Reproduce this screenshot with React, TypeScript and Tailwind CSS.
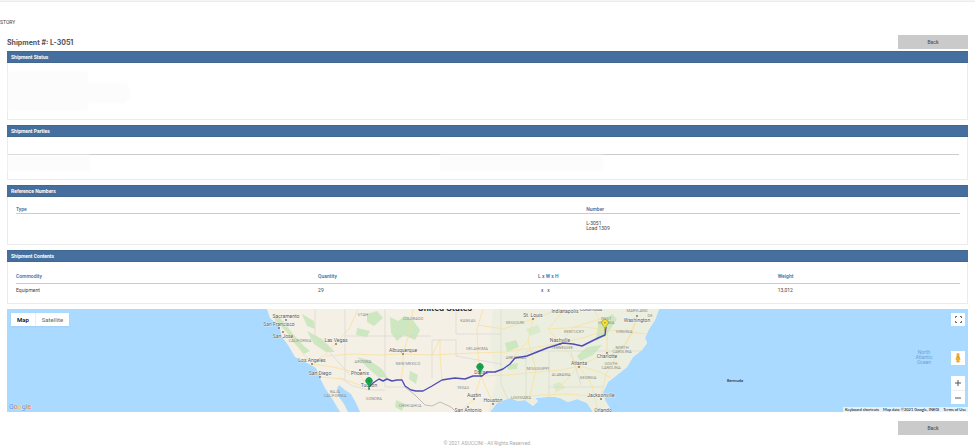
import { ReactNode } from 'react';

const cities = [
  { name: 'Sacramento', x: 278, y: 9, dot: [278, 11] },
  { name: 'San Francisco', x: 271, y: 17, dot: [271, 19] },
  { name: 'San Jose', x: 275, y: 29, dot: [275, 23] },
  { name: 'Las Vegas', x: 328, y: 33, dot: [328, 35] },
  { name: 'Los Angeles', x: 304, y: 53, dot: [304, 55] },
  { name: 'San Diego', x: 312, y: 66, dot: [312, 68] },
  { name: 'Phoenix', x: 352, y: 66, dot: [352, 61] },
  { name: 'Tucson', x: 361, y: 78, dot: [361, 80] },
  { name: 'Albuquerque', x: 395, y: 43, dot: [395, 45] },
  { name: 'Dallas', x: 473, y: 65, dot: [473, 67] },
  { name: 'Austin', x: 466, y: 88, dot: [466, 90] },
  { name: 'Houston', x: 485, y: 93, dot: [485, 95] },
  { name: 'San Antonio', x: 460, y: 103, dot: [460, 98] },
  { name: 'St. Louis', x: 525, y: 8, dot: [525, 10] },
  { name: 'Indianapolis', x: 557, y: 4, dot: [557, -2] },
  { name: 'Columbus', x: 583, y: 2, dot: [583, -2] },
  { name: 'Washington', x: 629, y: 13, dot: [629, 7] },
  { name: 'Nashville', x: 552, y: 33, dot: [552, 35] },
  { name: 'Charlotte', x: 599, y: 49, dot: [599, 44] },
  { name: 'Atlanta', x: 571, y: 56, dot: [571, 58] },
  { name: 'Jacksonville', x: 593, y: 88, dot: [593, 90] },
  { name: 'Orlando', x: 595, y: 103, dot: [595, 106] },
];

const regions = [
  { name: 'CALIFORNIA', x: 292, y: 33 },
  { name: 'UTAH', x: 355, y: 7 },
  { name: 'COLORADO', x: 405, y: 11 },
  { name: 'ARIZONA', x: 355, y: 54 },
  { name: 'NEW MEXICO', x: 400, y: 56 },
  { name: 'BAJA', x: 327, y: 84 },
  { name: 'CALIFORNIA', x: 327, y: 88 },
  { name: 'SONORA', x: 366, y: 91 },
  { name: 'CHIHUAHUA', x: 402, y: 98 },
  { name: 'KANSAS', x: 460, y: 13 },
  { name: 'MISSOURI', x: 507, y: 15 },
  { name: 'OKLAHOMA', x: 469, y: 41 },
  { name: 'ARKANSAS', x: 508, y: 50 },
  { name: 'TEXAS', x: 455, y: 80 },
  { name: 'LOUISIANA', x: 513, y: 90 },
  { name: 'MISSISSIPPI', x: 530, y: 61 },
  { name: 'ALABAMA', x: 553, y: 67 },
  { name: 'GEORGIA', x: 580, y: 70 },
  { name: 'TENNESSEE', x: 554, y: 40 },
  { name: 'KENTUCKY', x: 566, y: 24 },
  { name: 'WEST', x: 598, y: 11 },
  { name: 'VIRGINIA', x: 598, y: 15 },
  { name: 'VIRGINIA', x: 616, y: 24 },
  { name: 'MARYLAND', x: 629, y: 3 },
  { name: 'DE', x: 642, y: 8 },
  { name: 'NORTH', x: 614, y: 40 },
  { name: 'CAROLINA', x: 614, y: 44 },
  { name: 'SOUTH', x: 603, y: 56 },
  { name: 'CAROLINA', x: 603, y: 60 },
];

function Panel({ title, children }: { title: string; children: ReactNode }) {
  return (
    <section className="mb-[5px]">
      <h2 className="h-3 border-y border-[#42688f] bg-[#446f9f] pl-1 text-[5px] leading-[10px] font-bold text-white">
        {title}
      </h2>
      <div className="border border-t-0 border-[#ebebeb]">{children}</div>
    </section>
  );
}

function BackButton() {
  return (
    <button type="button" className="h-[14px] w-[70px] bg-[#cacaca] text-[5px] font-medium text-[#555]">
      Back
    </button>
  );
}

function Pin({ x, y, fill, stroke }: { x: number; y: number; fill: string; stroke: string }) {
  return (
    <g transform={`translate(${x} ${y})`}>
      <path
        d="M0 0 C-.4 -4 -1.1 -4.6 -2.2 -5.8 A3.3 3.3 0 1 1 2.2 -5.8 C1.1 -4.6 .4 -4 0 0Z"
        fill={fill}
        stroke={stroke}
        strokeWidth=".5"
      />
      <circle cy="-8.2" r=".7" fill={stroke} />
    </g>
  );
}

function RouteMap() {
  return (
    <svg
      viewBox="-1 0 961 103"
      preserveAspectRatio="xMidYMid slice"
      className="block h-full w-full bg-[#aadaff]"
      role="img"
      aria-label="Shipment route"
    >
      <defs>
        <clipPath id="land">
          <path d="M259 0 L262 9 L271 17 L274 28 L280 36 L287 48 L299 54 L308 59 L312 69 L317 79 L325 91 L332 103 L340 103 L336 95 L331 88 L329 80 L331 76 L337 81 L343 85 L348 94 L352 103 H482 L489 94 L502 89 L510 92 L517 91 L525 97 L530 92 L527 89 L539 88 L547 88 L552 89 L560 93 L569 90 L579 94 L585 103 H604 L597 91 L595 83 L600 73 L609 66 L619 58 L625 48 L634 41 L639 34 L637 29 L641 20 L647 11 L651 0Z" />
        </clipPath>
      </defs>
      <g clipPath="url(#land)">
        <rect width="960" height="103" fill="#f4f0e5" />
        {/* Plains and eastern woodland */}
        <path d="M485 0 H660 V103 H480 L488 70 L482 35Z" fill="#ecefdf" />
        <g fill="#cde7c1">
          <path d="M266 4 L275 12 L285 25 L296 37 L302 42 L296 45 L287 35 L278 22 L267 12Z" />
          <path d="M294 5 L306 12 L307 20 L299 17Z M299 22 L314 30 L327 43 L318 43 L306 35Z" />
          <path d="M359 5 L369 2 L375 9 L366 17 L359 13Z M349 19 L362 22 L359 28 L348 26Z" />
          <path d="M382 8 L390 12 L397 7 L405 11 L412 21 L407 31 L396 26 L389 32 L383 24Z" />
          <path d="M349 48 L361 51 L374 60 L380 69 L370 68 L360 59Z M402 62 L410 66 L408 75 L401 70Z" />
          <path d="M300 57 L312 64 L311 68 L305 63Z M388 91 L397 95 L394 102 L387 98Z" />
          <path d="M497 34 L508 31 L511 38 L499 43Z M499 56 L510 54 L509 60 L500 61Z" />
          <path d="M590 15 L604 5 L609 10 L598 27 L588 32Z M569 47 L579 38 L594 36 L585 46 L572 52Z" />
          <path d="M518 20 L530 16 L533 23 L522 27Z M545 75 L552 73 L557 79 L548 83Z" opacity=".6" />
        </g>
        <g fill="none" stroke="#d7d4cd" strokeWidth=".6">
          <path d="M307 0 V27 L342 66 M337 0 V70 M377 0 V78 M337 27 H423 M424 31 H448 V47 M424 31 V69 M377 78 H397" />
          <path d="M332 69 L345 77 L361 81 H377 M448 3 V25 M448 25 H493 M493 0 V57 M448 47 L470 51 L493 55 V75 L500 91 M518 43 V91 M541 43 V88 M563 43 L573 76 M541 78 H595 M518 42 H637" />
          <path d="M397 78 L407 86 L417 96 L424 97 L432 93 L443 98 L448 103" stroke="#9a9a9a" />
        </g>
        <g fill="none" stroke="#f9dfa0" strokeWidth=".8">
          <path d="M274 18 L285 30 L296 46 L305 56 L312 67 M304 55 L318 45 L328 34 L341 20 L350 0 M304 55 L325 58 L350 64 L361 78" />
          <path d="M318 47 L345 45 L370 46 L395 45 L424 46 L465 44 L498 43 L530 38 L552 34 L575 29 L600 20" />
          <path d="M395 45 L395 59 L393 71 M395 45 L402 22 L405 0 M424 46 L432 30 L432 46 L434 70 M357 78 L335 70 L313 68" />
          <path d="M473 67 L470 45 L469 20 L475 0 M473 67 L466 90 L452 103 M473 67 L485 95 M485 95 L510 88 L535 86 L560 85 L593 88" />
          <path d="M473 67 L500 66 L530 63 L553 61 L571 57 L599 44 L618 35 L629 8 M503 50 L520 32 L525 10 L550 1 M525 10 L495 20 L470 16" />
          <path d="M571 57 L552 34 L540 20 L557 0 M571 57 L584 76 L590 103 M571 57 L555 75 L545 86 M593 88 L598 65 L611 43 L624 25 L629 8 M520 32 L528 60 L522 87" />
          <path d="M599 44 L599 22 L585 0 M571 57 L592 63 L603 69 M552 34 L566 18 L592 10 M540 20 L575 18 L602 21 L640 25" />
        </g>
      </g>
      <text x="437" y="2" fontSize="9" fontWeight="700" textAnchor="middle" fill="#333">
        United States
      </text>
      <g fontSize="4" textAnchor="middle" fill="#8d8e89">
        {regions.map((region) => (
          <text key={`${region.name}-${region.x}-${region.y}`} x={region.x} y={region.y}>
            {region.name}
          </text>
        ))}
      </g>
      <g fontSize="5" textAnchor="middle" fill="#555">
        {cities.map((city) => (
          <g key={city.name}>
            <circle cx={city.dot[0]} cy={city.dot[1]} r=".9" fill="#74706a" />
            <text x={city.x} y={city.y} stroke="#fff" strokeWidth=".5" paintOrder="stroke">
              {city.name}
            </text>
          </g>
        ))}
      </g>
      <path
        d="M361 78 L365 74 L371 70 L375 72 L379 70 L384 72 L389 71 L394 71 L397 77 L403 81 L408 82 L415 82 L424 77 L434 71 L440 70 L447 69 L457 70 L465 67 L474 67 L479 63 L487 63 L495 60 L502 55 L507 49 L519 47 L529 43 L539 39 L555 34 L565 35 L574 37 L582 33 L590 29 L597 26 L598 18"
        fill="none"
        stroke="#4f4db4"
        strokeWidth="1.4"
        strokeLinejoin="round"
      />
      <Pin x={361} y={80} fill="#12a84b" stroke="#087a34" />
      <Pin x={472} y={66} fill="#12a84b" stroke="#087a34" />
      <Pin x={597} y={22} fill="#f4e23c" stroke="#817724" />
      <text x="727" y="73" fontSize="4" fontWeight="500" textAnchor="middle" fill="#333">
        Bermuda
      </text>
      <g fontSize="5" textAnchor="middle" fill="#6ea3d6">
        <text x="916" y="45">North</text>
        <text x="916" y="50">Atlantic</text>
        <text x="916" y="55">Ocean</text>
      </g>
    </svg>
  );
}

function MapPanel() {
  return (
    <div className="relative h-[103px] overflow-hidden">
      <RouteMap />
      <div className="absolute top-1 left-1 flex h-[13px] bg-white text-[6px] shadow-xs">
        <button type="button" className="w-6 font-medium text-black">
          Map
        </button>
        <button type="button" className="w-[34px] border-l border-[#eee] text-[#666]">
          Satellite
        </button>
      </div>
      <div className="absolute top-1 right-[3px] flex w-[14px] flex-col">
        <button type="button" aria-label="Full screen" className="flex h-[13px] items-center justify-center bg-white">
          <svg viewBox="0 0 7 7" className="size-[7px]" fill="none" stroke="#666" strokeWidth="1">
            <path d="M.5 2 V.5 H2 M5 .5 H6.5 V2 M6.5 5 V6.5 H5 M2 6.5 H.5 V5" />
          </svg>
        </button>
        <button
          type="button"
          aria-label="Street View"
          className="mt-[25px] flex h-[14px] items-center justify-center bg-white"
        >
          <svg viewBox="0 0 8 12" className="h-3 w-2">
            <ellipse cx="4" cy="9.5" rx="2.4" ry="1" fill="#d9c9a0" />
            <circle cx="4" cy="2.7" r="1.6" fill="#efad2d" />
            <path d="M2.3 4.3 H5.7 L6.5 7.8 L5.4 8 L5 10.2 H3 L2.6 8 L1.5 7.8Z" fill="#efad2d" />
            <path d="M3.1 4.3 L4 5.4 L4.9 4.3Z" fill="#b97916" />
          </svg>
        </button>
        <div className="mt-[11px] flex flex-col bg-white">
          <button type="button" aria-label="Zoom in" className="flex h-[14px] items-center justify-center">
            <svg viewBox="0 0 6 6" className="size-[6px]" stroke="#555" strokeWidth="1">
              <path d="M3 0 V6 M0 3 H6" />
            </svg>
          </button>
          <button
            type="button"
            aria-label="Zoom out"
            className="flex h-[14px] items-center justify-center border-t border-[#eee]"
          >
            <svg viewBox="0 0 6 6" className="size-[6px]" stroke="#555" strokeWidth="1">
              <path d="M0 3 H6" />
            </svg>
          </button>
        </div>
      </div>
      <div className="absolute bottom-px left-[2px] text-[7px] leading-[8px] text-[#4f8be8] [-webkit-text-stroke:0.3px_white] [paint-order:stroke]">
        G<span className="text-[#df6a5c]">o</span>
        <span className="text-[#e8b83a]">o</span>g<span className="text-[#49a365]">l</span>
        <span className="text-[#df6a5c]">e</span>
      </div>
      <div className="absolute right-0 bottom-0 flex h-[5px] gap-1 bg-[#e6f2fb] px-[2px] font-['Lato','Liberation_Sans',sans-serif] text-[4px] leading-[5px] text-black">
        <button type="button">Keyboard shortcuts</button>
        <span>Map data ©2021 Google, INEGI</span>
        <a href="#terms">Terms of Use</a>
      </div>
    </div>
  );
}

export default function App() {
  return (
    <div className="border-t border-[#f5f5f5] bg-white font-['Roboto','Liberation_Sans',sans-serif] text-[5px] leading-[5px] text-[#444]">
      <nav className="flex h-[34px] items-center overflow-hidden border-t border-[#ececec] pt-2">STORY</nav>
      <main className="mx-[7px]">
        <div className="mb-[2px] flex items-center justify-between">
          <h1 className="pt-[2px] font-['Inter','Liberation_Sans',sans-serif] text-[7px] leading-[12px] font-bold text-[#555]">
            Shipment #: L-3051
          </h1>
          <BackButton />
        </div>

        <Panel title="Shipment Status">
          <div className="h-14 pt-2">
            <div className="h-3 w-20 bg-[#fcfcfc] blur-[1px]" />
            <div className="h-5 w-[122px] rounded-r-lg bg-[#fcfcfc] blur-[1px]" />
            <div className="h-2 w-20 bg-[#fcfcfc] blur-[1px]" />
          </div>
        </Panel>

        <Panel title="Shipment Parties">
          <div className="mr-2 h-[18px] border-b border-[#ccc]" />
          <div className="flex h-6">
            <div className="h-4 w-[45%] pr-[350px]">
              <div className="h-4 bg-[#fcfcfc] blur-[1px]" />
            </div>
            <div className="h-4 w-[17%] bg-[#fcfcfc] blur-[1px]" />
          </div>
        </Panel>

        <Panel title="Reference Numbers">
          <div className="h-[47px] pt-[7px] pr-[7px] pl-2">
            <table className="w-full table-fixed text-left">
              <thead className="border-b border-[#ccc] text-[#39699f]">
                <tr>
                  <th className="h-[9px] w-[60.4%] pt-[2px] font-medium">Type</th>
                  <th className="pt-[2px] font-medium">Number</th>
                </tr>
              </thead>
              <tbody>
                <tr>
                  <td />
                  <td className="pt-[7px]">
                    L-3051
                    <br />
                    Load 1309
                  </td>
                </tr>
              </tbody>
            </table>
          </div>
        </Panel>

        <Panel title="Shipment Contents">
          <div className="h-[41px] pt-2 pr-[7px] pl-2">
            <table className="w-full table-fixed text-left">
              <thead className="border-b border-[#ccc] text-[#39699f]">
                <tr>
                  <th className="h-[13px] w-[32%] font-medium">Commodity</th>
                  <th className="w-[23.3%] font-medium">Quantity</th>
                  <th className="w-[25.4%] font-medium">L x W x H</th>
                  <th className="font-medium">Weight</th>
                </tr>
              </thead>
              <tbody>
                <tr>
                  <td className="h-[14px]">Equipment</td>
                  <td>29</td>
                  <td className="pl-[3px] whitespace-pre">x{'   '}x</td>
                  <td>13,012</td>
                </tr>
              </tbody>
            </table>
          </div>
        </Panel>

        <MapPanel />

        <div className="mt-[9px] flex justify-end">
          <BackButton />
        </div>
      </main>
      <footer className="pt-[6px] text-center text-[#aaa]">© 2021 ASUCCINI - All Rights Reserved.</footer>
    </div>
  );
}
